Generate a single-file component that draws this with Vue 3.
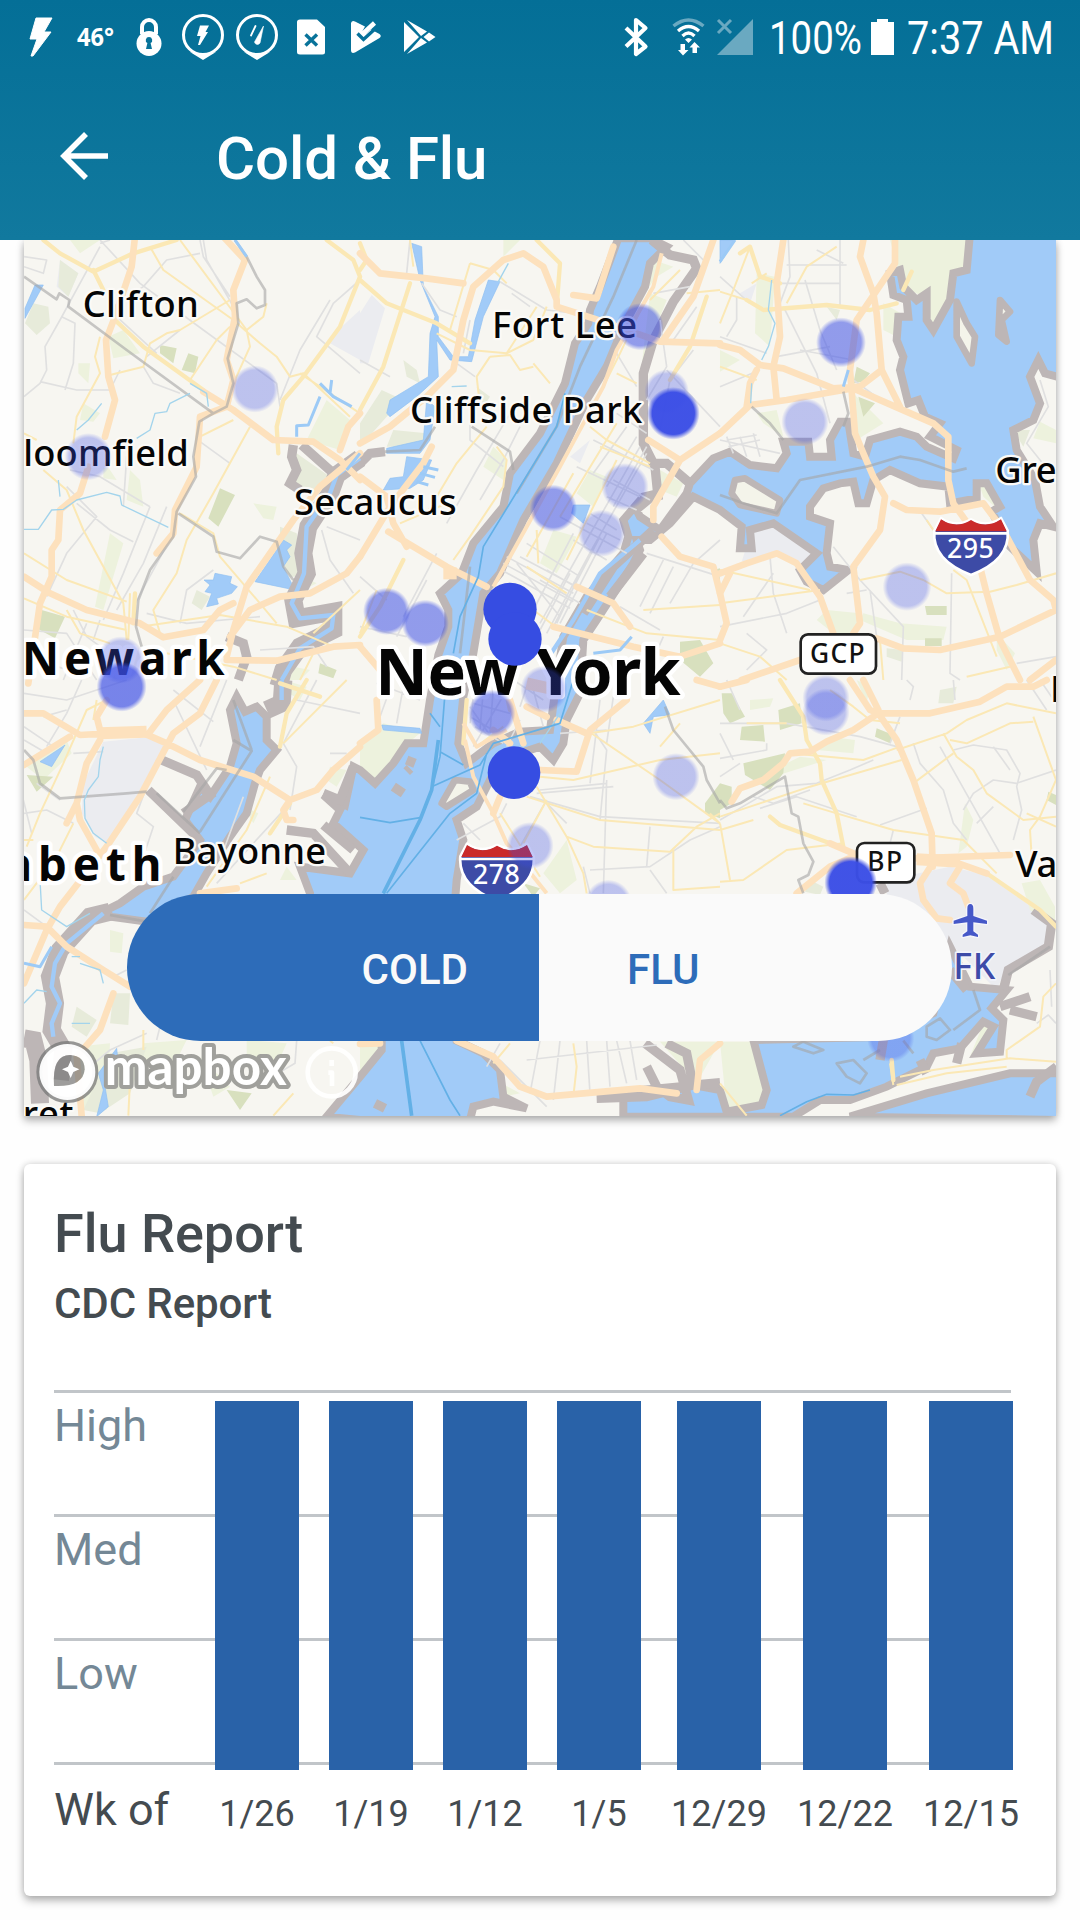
<script setup>
// Map tiles: every tile has its own local origin on the 3096 x 2628 map canvas.
const tiles = {
  a: 'translate(0 720)',
  b: 'translate(1080 720)',
  c: 'translate(2160 720)',
  d: 'translate(0 2040)',
  e: 'translate(1080 2040)',
  f: 'translate(2160 2040)',
  g: 'translate(0 0)',
}

const layers = [
  {
    name: 'urban',
    shapes: {
      a: 'M1080 210 L1020 265 990 310 1080 360Z M180 60 L235 100 205 170 170 140Z',
      b: 'M35 165 L75 205 25 370 0 370 0 220Z M690 600 L660 670 630 650Z',
      c: 'M95 870 L160 850 290 940 240 980 170 935 65 965Z M60 160 L110 130 90 190Z',
      d: 'M310 185 L460 170 500 200 330 495 285 470 245 400 250 310Z',
      f: 'M500 600 L690 560 800 585 990 720 980 800 860 860 830 930 690 790 500 660Z',
    },
  },
  {
    name: 'park',
    shapes: {
      a: 'M325 290 L370 270 420 340 340 355Z M235 370 L270 370 265 430 235 400Z M250 490 L300 520 280 545 240 540Z M980 480 L1050 540 1020 630 920 600Z M330 880 L370 910 310 1110 285 1100Z M390 690 L420 720 430 800 380 780Z M310 660 L350 720 310 715Z M760 790 L830 800 820 840 790 835Z M210 0 L300 0 240 40Z M880 1280 L930 1290 900 1320 860 1320Z M910 1010 L950 1030 890 1060Z',
      b: 'M690 690 L740 710 700 800 650 760Z M580 870 L650 890 590 1000 540 970Z M400 620 L440 660 430 720 370 680Z M880 60 L940 80 890 110 860 150Z M900 690 L970 730 950 770 900 750Z M430 0 L480 0 430 50Z M870 160 L920 180 860 330 840 420Z',
      c: 'M510 0 L750 0 740 80 690 180 640 260 610 170 550 140Z M110 100 L165 110 150 320 105 280Z M490 190 L560 230 530 290 490 270Z M0 330 L60 360 0 395Z M390 450 L420 480 490 550 410 600 395 570Z M960 545 L1008 570 1008 610 940 595Z M320 1110 L420 1120 400 1180 340 1180 290 1140Z M430 1120 L540 1150 680 1160 670 1200 560 1200 420 1140Z M830 1180 L885 1240 860 1290 830 1230Z M110 520 L170 510 190 590 130 550Z M780 740 L805 740 825 800 790 770Z',
      d: 'M80 260 L200 180 215 220 130 300Z M330 750 L370 760 365 820 330 815Z M430 1090 L560 1080 520 1160 420 1140Z M230 1100 L330 1090 320 1290 245 1290Z M740 1080 L860 1090 820 1180 740 1140Z M990 260 L1040 270 1010 320 980 300Z M730 380 L775 400 760 430Z M850 0 L920 20 900 60 850 30Z M600 1130 L690 1220 640 1250Z M860 560 L890 600 840 600Z',
      e: 'M0 200 L70 130 180 160 130 200 45 300 0 260Z M620 480 L650 600 600 640 550 580Z M60 1085 L60 1120 0 1180 0 1100Z M900 1085 L1080 1085 1010 1210Z M425 1210 L480 1240 430 1250Z',
      f: 'M0 1085 L95 1085 130 1230 115 1280 20 1290Z M330 170 L405 180 400 220 290 210Z M200 250 L240 230 320 240 160 290Z M735 370 L760 420 740 500 715 520Z M905 610 L960 600 1005 680 1005 740 930 690Z M790 1030 L815 1050 790 1110 750 1130Z M90 60 L160 55 150 80 90 90Z M410 0 L450 20 440 70Z',
    },
  },
  {
    name: 'grove',
    shapes: {
      a: 'M480 315 L530 325 520 370 480 340Z M565 340 L595 350 585 400 545 390Z M660 745 L705 765 655 860 625 835Z M125 1110 L195 1130 165 1195 110 1165Z M960 1270 L1010 1290 1000 1315 955 1300Z',
      b: 'M960 1205 L1020 1200 1060 1270 1020 1310 960 1260Z M1060 990 L1080 985 1080 1030Z',
      c: 'M410 380 L450 400 430 425 400 430Z M415 470 L465 490 430 530Z M615 1098 L680 1098 680 1125 620 1125Z M615 1195 L665 1195 665 1218 615 1218Z',
      d: 'M80 285 L160 290 110 335Z M680 1230 L755 1240 720 1290Z',
      e: 'M1080 310 L1035 370 1035 400 1080 415Z M490 610 L540 625 520 650Z',
      f: 'M5 40 L35 40 75 110 30 130 10 100Z M65 140 L130 135 135 185 60 180Z M175 90 L240 70 245 130 180 150Z M70 250 L195 220 190 280 150 330 75 285Z M0 310 L35 320 35 370 0 390Z M470 145 L520 165 510 190 465 170Z M985 335 L1008 345 1008 375 980 360Z',
    },
  },
  {
    name: 'marsh',
    shapes: {
      a: 'M890 640 L990 710 940 770 860 740Z M840 860 L890 880 910 1010 870 1010 840 950Z M100 190 L145 200 150 250 110 285 75 250Z M590 1050 L630 1070 605 1110 575 1090Z M180 60 L235 100 205 170 175 140Z',
      b: 'M65 450 L130 480 80 530 0 620 0 550Z M130 360 L170 390 180 430 140 410Z M100 570 L200 580 190 620 80 620Z M350 440 L390 470 370 500Z',
      d: 'M340 940 L390 940 385 1035 330 1030Z M230 980 L290 1020 260 1070 215 1040Z M330 1120 L440 1100 390 1240 300 1300 250 1290Z',
      f: 'M270 600 L310 620 300 645 255 635Z M660 30 L710 20 700 70 655 70Z',
      c: 'M320 200 L360 210 350 240Z M880 570 L930 570 910 620Z M500 1225 L550 1230 545 1265 500 1250Z',
    },
  },
  {
    name: 'sea',
    shapes: {
      g: 'M1855 715 L1800 860 1770 930 1765 970 1725 1030 1695 1150 1620 1300 1530 1420 1510 1520 1420 1630 1385 1720 1320 1780 1345 1830 1345 1880 1315 1965 1290 2100 1270 2230 1220 2230 1180 2290 1125 2350 1080 2310 1060 2300 1035 2415 970 2385 1020 2430 1000 2470 1090 2550 1050 2620 900 2600 930 2680 930 2780 900 2960 1145 3100 1145 3150 1080 3230 980 3350 1080 3360 1410 3360 1420 3320 1480 3305 1580 3325 1510 3290 1500 3210 1450 3160 1370 3122 1350 2900 1370 2640 1390 2520 1370 2460 1430 2420 1460 2360 1500 2280 1620 2240 1660 2280 1690 2230 1700 2160 1740 2080 1750 1920 1790 1860 1900 1690 1920 1650 1910 1620 1950 1620 2010 1570 2080 1490 2160 1530 2225 1580 2220 1645 2255 1645 2250 1590 2320 1570 2450 1660 2400 1710 2420 1745 2470 1770 2545 1710 2490 1700 2480 1660 2490 1570 2430 1550 2430 1520 2470 1465 2520 1450 2560 1445 2575 1510 2600 1510 2620 1440 2670 1410 2760 1450 2845 1460 2850 1510 2930 1495 2930 1450 2960 1450 3000 1520 2975 1535 3030 1640 3110 1715 3100 1620 3120 1570 3160 1580 3120 1520 3105 1440 3050 1350 3040 1290 3100 1260 3120 1210 3090 1130 3115 1080 3135 1120 3190 1135 3190 700 2910 700 2900 810 2860 820 2850 900 2800 990 2780 960 2780 880 2750 900 2710 860 2700 810 2670 820 2680 885 2720 900 2725 950 2695 950 2690 1020 2710 1070 2700 1110 2725 1210 2755 1200 2775 1250 2820 1270 2790 1310 2870 1350 2860 1375 2780 1340 2750 1310 2700 1295 2610 1320 2595 1370 2560 1360 2545 1265 2520 1265 2490 1320 2495 1370 2430 1370 2425 1325 2350 1325 2360 1360 2330 1405 2250 1395 2190 1355 2140 1375 2070 1450 2060 1480 1980 1590 1920 1550 1910 1530 1970 1480 1930 1490 1870 1560 1885 1610 1870 1660 1760 1790 1690 1910 1670 2040 1650 2190 1560 2195 1480 2230 1400 2290 1375 2230 1390 2090 1420 1960 1450 1780 1500 1720 1570 1560 1670 1390 1760 1200 1820 1100 1870 980 1935 860 1950 790 2000 740 1950 715Z',
      d: 'M710 50 L690 90 710 190 690 260 630 350 600 320 555 420 600 480 520 590 430 620 360 670 320 690 330 710 440 725 580 650 620 580 690 470 740 400 765 310 780 270 830 210 800 180 800 110 770 80 735 95Z',
      f: 'M100 1080 L140 1230 125 1275 20 1295 0 1230 -80 1215 -290 1235 -290 1310 220 1310 300 1260 390 1260 500 1220 620 1160 640 1120 720 1105 790 1025 820 1040 770 1120 840 1115 850 1020 815 985 860 930 750 920 690 800 640 1000 500 1070Z M390 1310 L620 1240 870 1180 1020 1180 1020 1320Z',
    },
  },
  {
    name: 'pond',
    shapes: {
      a: 'M105 135 L130 135 75 235 75 205Z M850 900 L875 915 860 930 870 950 850 980 885 1050 765 1025Z M645 1000 L695 1010 690 1030 712 1040 695 1060 650 1075 655 1092 620 1100 635 1060 615 1055 630 1035 612 1020 640 1020Z',
      b: 'M385 120 L420 125 370 230 335 365 270 360 230 300 235 410 170 470 90 530 80 520 90 480 205 410 210 280 225 230 180 120 155 10 185 20 190 140 235 230 235 290 280 350 325 350 345 240Z M640 795 L690 795 670 850 635 820Z M200 480 L225 500 210 600 180 640 80 640 80 625 190 600Z M70 750 L90 715 130 710 140 650 215 660 190 720 150 745Z',
      d: 'M120 245 L195 195 155 260Z M350 1105 L355 1150 315 1220 325 1280 290 1310 310 1230 295 1180Z',
      e: 'M65 135 L180 145 185 160 70 150Z M850 130 L910 60 930 105 880 110 870 160Z',
      c: 'M0 0 L45 0 0 70Z',
    },
  },
  {
    name: 'island',
    shapes: {
      c: 'M45 720 L75 715 180 780 170 820 60 795 35 760Z M710 185 L740 250 765 290 755 370 710 290Z M840 180 L870 215 845 240 860 305 835 285Z',
      e: 'M285 300 L330 305 340 330 260 380 245 370Z',
    },
  },
  {
    name: 'pier',
    shapes: {
      d: 'M485 240 L590 285 630 345 550 400 M445 330 L590 470 M860 450 L940 460 1050 580 M970 435 L1060 510 M1060 260 L1020 360 970 340',
      e: 'M140 240 L165 250 M150 265 L140 275 M100 320 L130 340 M855 1090 L960 1170 985 1260 930 1250 890 1220 860 1160 M710 1255 L860 1250 1000 1215 1080 1208 M920 1090 L980 1120 1000 1220 M45 1270 L75 1285',
      f: 'M840 980 L930 950 M870 990 L950 1010 M940 690 L995 730 985 800 865 870 850 930 M740 930 L690 870 M480 610 L495 640 M710 1150 L725 1090 M930 1250 L950 1205 1010 1160 M600 1140 L620 1180 M490 1080 L480 1140',
      g: 'M1955 720 L2010 765 2080 780 2090 805 2020 905 1960 1020 1930 1120 1930 1330 1965 1400 1975 1500 M1965 1390 L2000 1390 2070 1450 M1960 1590 L1840 1700 1750 1840 M1930 1660 L1830 1790',
      a: 'M880 615 L875 650 890 690 870 730 900 750 M905 615 L1000 700 M680 1190 L730 1210 740 1250 715 1320',
      b: 'M0 670 L30 640 75 635',
    },
  },
  {
    name: 'channel-bank',
    shapes: {
      a: 'M1080 655 L1010 705 990 760 925 860 910 940 920 1000 880 1080 890 1135 1000 1115 1000 1170 900 1220 850 1290 835 1340',
      d: 'M850 0 L845 70 800 90 M330 695 L270 710 180 810 150 890 165 970 155 1050 190 1110 180 1200 M72 1075 L100 1080 115 1140 120 1270',
    },
  },
  {
    name: 'channel',
    shapes: {
      a: 'M1080 655 L1010 705 990 760 920 860 912 1000 875 1090 900 1135 1000 1125 995 1165 900 1225 845 1320',
      b: 'M560 1260 L640 1140 720 1000 840 900',
      d: 'M845 0 L845 60 M310 700 L200 790 165 850 155 920 180 970 155 1030 160 1070',
    },
  },
  {
    name: 'street',
    shapes: {
      a: 'M72 50 L140 60 130 100 72 80 M300 20 L180 240 135 320 140 390 120 430 72 470 M185 230 L225 250 220 370 195 450 M120 425 L230 450 330 450 360 390 M300 0 L420 130 610 270 830 430 840 500 M610 0 L620 60 700 200 M600 40 L500 60 430 140 340 200 M600 0 L610 50 670 140 690 170 M350 230 L470 340 M430 380 L460 430 540 460 M540 270 L440 350 M990 180 L900 330 840 480 M600 605 L690 670 M210 690 L300 710 450 800 M230 790 L330 870 400 905 M450 800 L370 1000 310 1140 M500 800 L430 970 350 1110 M520 880 L400 1100 M200 740 L290 830 200 940 140 1070 M640 990 L560 1050 540 1150 M440 1120 L560 1150 780 1130 M780 1230 L940 1220 980 1280 M965 870 L990 960 1060 1060 M980 860 L1080 900 M380 650 L370 800 M72 1170 L200 1180 290 1320 M220 1110 L260 1190 370 1270 M330 0 L300 10 M1080 120 L1000 190 950 290 1080 400 M260 1150 L190 1320 M300 1140 L280 1200 M72 1250 L270 1310',
      b: 'M150 0 L140 100 M185 130 L240 210 290 230 M0 360 L90 410 M330 240 L310 340 M420 125 L560 210 650 220 M455 160 L510 200 M290 370 L345 410 M330 540 L330 600 430 680 M450 520 L350 690 260 850 M480 560 L430 660 360 780 M880 160 L990 140 M900 240 L920 380 860 480 M1000 330 L930 420 900 570 M920 390 L1080 560 M1010 200 L940 300 M1030 60 L970 0 M770 340 L830 440 M0 1010 L80 1080 M230 940 L130 1130 M200 1020 L110 1190 M0 1160 L140 1190 M860 940 L1080 1010 M910 960 L840 1100 M940 980 L870 1120 M780 1100 L900 1170 M1080 900 L1000 970 930 1090 M870 1280 L910 1190',
      c: 'M205 0 L210 110 180 190 M200 75 L380 75 M180 130 L360 130 M290 30 L370 70 M360 0 L360 200 M0 110 L90 190 M50 170 L50 240 20 290 M0 290 L140 340 M190 200 L290 400 330 550 M240 330 L400 360 M0 440 L120 390 M170 350 L330 320 M255 120 L300 270 350 390 M0 600 L180 640 M20 590 L40 640 M60 590 L80 650 M100 580 L120 650 M20 600 L110 585 M25 620 L120 600 M400 420 L510 500 M960 420 L985 500 920 610 1008 720 M150 950 L160 1060 200 1180 M0 1160 L200 1120 300 1080 M340 920 L420 1020 550 1160 545 1320 M605 820 L640 870 M695 1000 L690 1300 720 1320 M450 1050 L470 1190 M890 1270 L1008 1250 M80 1180 L140 1230 80 1290 M380 1060 L440 1050 M160 1000 L70 1130',
      d: 'M72 40 L200 60 380 0 M245 0 L200 100 140 200 M72 140 L160 200 M72 180 L140 220 M220 220 L310 215 M72 400 L140 390 220 430 M110 310 L180 360 M70 360 L95 460 M470 240 L410 400 460 440 430 530 M520 30 L640 125 M680 0 L600 200 M520 60 L620 270 M730 350 L660 540 M850 190 L890 260 870 390 M950 0 L850 190 M890 60 L1080 100 M1040 220 L990 220 M870 370 L650 610 M500 960 L470 1080 M440 1060 L330 1110 270 1160 M890 1082 L885 1150 800 1200 M340 890 L380 870 M72 690 L140 740 M200 90 L130 110',
      e: 'M540 330 L740 310 M530 340 L760 320 M740 300 L730 640 M700 150 L740 210 720 420 M720 60 L690 310 M690 570 L870 560 990 480 1080 440 M870 440 L860 560 M760 50 L740 190 M670 560 L690 640 M870 570 L920 640 M480 120 L440 200 M330 80 L400 180 M340 70 L450 100 M600 160 L740 150 M290 480 L420 410 440 370 M310 430 L360 480 M560 370 L620 430 M480 500 L560 360 M510 350 L720 410 1080 430 M500 1140 L890 1095 M540 1082 L510 1240 M600 1082 L580 1260 M680 1082 L690 1240 M740 1082 L750 1220 M770 1082 L800 1210 M810 1082 L830 1200 M420 1140 L560 1280 M380 1160 L420 1090 M100 0 L60 110 M130 20 L110 130 M50 10 L180 60',
      f: 'M0 130 L200 130 420 170 530 200 M0 235 L140 210 140 190 M0 290 L60 250 M0 420 L170 320 290 310 390 270 460 240 M100 350 L160 370 270 330 M120 385 L230 350 410 410 M480 435 L620 385 M520 450 L510 490 M540 110 L510 190 M580 190 L600 250 670 330 700 430 740 480 M660 200 L840 520 M700 210 L760 195 860 210 900 280 890 320 905 390 880 480 M890 310 L820 300 760 340 730 390 M890 310 L1008 270 M560 0 L580 20 570 60 M700 0 L705 60 M920 0 L980 90 M960 0 L1008 70 M0 160 L40 240 M20 0 L60 90 M820 380 L770 430 M990 870 L995 980 M950 1030 L985 1005 1008 1030 M820 200 L870 270',
    },
  },
  {
    name: 'grid-street',
    shapes: {
      b: 'M440 950 L640 1060 M430 970 L640 1085 M425 990 L630 1105 M480 950 L650 1040 M500 910 L660 1010 M470 970 L600 1130 M560 1180 L700 920 860 640 M540 1150 L680 900 840 620 M600 1150 L740 880 M520 1110 L640 880 M580 1160 L720 890 M600 830 L800 940 M650 680 L840 770 M700 600 L880 690 M770 520 L860 580 M760 720 L870 780 M690 820 L770 870 M740 770 L830 810 M680 850 L780 900 M640 900 L740 960 M800 560 L700 700 M830 590 L740 740 M860 620 L760 800 M540 1020 L660 1090 M560 990 L680 1060 M630 1000 L540 1170 M660 1000 L590 1150',
      e: 'M340 50 L330 130 M370 30 L360 150 M400 20 L390 160 M440 30 L340 200 M330 110 L450 180 M345 140 L430 190 M460 0 L550 60 M500 20 L480 80 M520 30 L550 140',
    },
  },
  {
    name: 'minor',
    shapes: {
      a: 'M450 20 L490 90 700 240 780 310 830 350 870 410 910 400 1050 530 M540 0 L740 270 M690 260 L650 300 570 420 M740 270 L790 230 800 190 M740 270 L750 320 700 430 M330 405 L430 380 450 310 500 280 540 270 690 180 M300 290 L285 350 300 400 230 530 220 610 M750 560 L640 760 560 900 530 1000 460 1110 480 1180 M540 820 L640 880 660 950 780 1090 830 1150 M72 940 L200 1020 380 1085 M130 690 L200 750 250 870 370 1090 380 1200 M72 1075 L200 1130 380 1170 M420 1160 L660 1125 860 1160 1000 1220 M1080 520 L900 400 M72 580 L110 600 M600 590 L700 540 M200 1110 L240 1180 330 1210 M390 1060 L385 1200 M500 1240 L700 1280 830 1320 M1080 1050 L940 1180 M940 1240 L900 1320',
      b: 'M150 0 L160 80 M330 70 L270 270 M330 70 L400 90 440 130 M230 280 L330 330 440 340 530 200 M390 350 L350 410 360 500 M390 350 L450 345 480 390 520 380 M440 340 L520 300 560 200 M520 370 L570 430 M380 560 L290 670 200 820 M410 620 L440 660 430 740 330 890 280 960 M260 790 L120 850 M690 560 L740 600 870 670 M870 150 L780 340 720 460 600 680 M960 90 L870 180 M1080 150 L980 160 M770 400 L830 430 M640 700 L500 950 M770 660 L620 960 M530 870 L535 970 M770 550 L600 830 M720 620 L870 680 M500 980 L620 1060 M850 1110 L1080 1095 M680 1110 L860 1180 1080 1200 M520 1110 L600 1170 M0 1180 L50 1050',
      c: 'M0 155 L80 180 M95 130 L140 100 M350 20 L260 80 200 190 M0 250 L40 150 90 20 M420 1020 L540 995 610 1020 680 1060 810 1055 890 1035 1008 1000 M0 990 L270 1050 M0 1090 L300 1050 M700 990 L740 1020 830 1250 M640 870 L620 840 M0 1210 L120 1250 200 1320 M480 1200 L490 1320 M740 1310 L870 1280 M0 380 L110 420',
      d: 'M320 60 L260 90 190 250 120 400 80 500 M290 60 L280 120 M220 430 L170 530 72 660 M1040 0 L850 190 M810 290 L740 450 620 620 M800 580 L720 610 M430 1050 L430 1110 M390 1200 L385 1307 M880 1240 L820 1307 M1000 1090 L990 1082 M72 480 L100 480',
      e: 'M540 290 L640 300 900 240 1080 220 M530 320 L620 470 670 580 680 640 M500 350 L720 420 1080 450 M620 470 L700 500 930 515 1010 440 1080 400 M680 150 L900 300 1080 430 M690 160 L820 140 1080 60 M940 510 L940 630 1080 620 M900 200 L960 130 M560 360 L490 490 M350 200 L430 140 M640 1090 L650 1160 640 1250 M450 1090 L400 1150 M420 400 L540 590 M1050 400 L1080 430',
      f: 'M330 30 L400 80 450 120 540 130 M530 210 L680 160 740 120 860 70 1008 100 M200 130 L80 130 M210 220 L430 240 540 200 M690 180 L740 190 870 130 940 125 M670 160 L710 230 760 270 800 340 910 420 1008 410 M1008 300 L960 410 930 450 935 530 M580 310 L700 220 M545 240 L270 320 0 410 M250 370 L350 400 520 450 730 480 830 580 M370 490 L200 510 70 600 0 605 M940 110 L1008 300 M100 420 L0 450 M0 430 L30 600 M920 400 L1008 440 M1008 910 L970 950 960 1040 860 1110 860 1140 M540 1190 L640 1170 870 1135 1008 1145 M530 1215 L680 1180 860 1160 M0 1210 L80 1307 M510 1150 L520 1215',
    },
  },
  {
    name: 'major',
    shapes: {
      a: 'M130 0 L180 40 280 95 400 40 530 0 M280 90 L310 150 M350 245 L430 320 610 450 M1080 110 L1020 260 910 410 850 480 830 560 835 640 M980 0 L1060 60 1080 110 M405 1060 L400 1150',
      b: 'M0 120 L80 190 230 250 330 310 M530 0 L600 70 590 200 M0 510 L70 380 150 130 M0 10 L20 60 0 90 M0 1190 L60 1100 130 960 M1040 170 L990 320 930 420',
      c: 'M90 20 L120 110 180 130 M80 180 L130 210 320 195 450 210 530 190 M575 95 L550 150 M60 40 L90 20',
      d: 'M920 0 L860 100 840 200 M870 370 L810 460 M840 10 L960 50',
      e: 'M320 60 L310 190 M430 0 L450 90',
      f: 'M180 0 L250 110 260 180 300 250 305 300 350 400 370 500 M150 410 L180 435 330 490 M800 580 L960 690 1008 740 M515 1140 L520 1200',
    },
  },
  {
    name: 'highway',
    shapes: {
      a: 'M405 -10 L395 80 345 230 318 300 325 410 345 480 315 590 M265 680 L240 760 180 810 175 900 155 930 155 1010 120 1090 85 1330 M670 -10 L735 60 700 150 705 230 680 360 700 420 680 500 600 530 590 680 525 810 520 880 470 940 M610 455 L700 510 820 600 940 605 1020 660 1080 720 M72 1010 L150 1060 260 1110 420 1150 490 1192 610 1170 660 1110 700 1090 M1080 640 L960 740 880 840 740 1040 700 1170 680 1250 M690 1190 L750 1110 840 1070 930 1060 1040 1000 1080 950 M680 1260 L830 1262 1000 1220 1080 1215 M1020 630 L1045 560 1080 520',
      b: 'M0 40 L60 100 200 115 310 130 M0 610 L90 560 200 470 280 390 310 240 340 140 430 60 490 40 550 80 590 180 590 200 700 235 900 305 1080 310 M640 165 L710 175 760 20 M215 620 L190 670 90 800 0 950 M0 710 L80 770 100 850 140 920 M85 875 L260 980 380 1040 M1060 0 L1000 170 910 300 M865 600 L960 660 1080 580 M960 660 L880 800 880 840 M905 890 L960 950 1060 980 1080 1060 M580 1160 L820 1220 960 1250 1080 1210 M650 1040 L760 1090 810 1160 M0 1220 L60 1290 80 1320',
      c: 'M190 0 L170 130 180 290 160 380 170 480 M0 315 L60 330 120 375 190 385 340 445 420 440 485 390 540 500 M0 580 L90 495 200 480 400 445 640 550 685 590 685 720 700 790 750 860 800 1060 840 1200 900 1320 M485 390 L470 220 460 160 420 50 430 0 M525 0 L525 70 410 240 390 390 405 580 430 640 460 710 495 770 480 870 400 980 420 1150 400 1180 M520 790 L560 810 660 815 790 790 850 870 930 1020 1000 1080 1008 1110 840 1190 660 1230 550 1225 470 1195 M0 1000 L80 970 170 940 230 970 300 1070 340 1180 M110 390 L90 430 80 500 M65 1320 L240 1260 M30 1000 L0 1060 20 1150 0 1200 M930 1320 L1008 1260',
      d: 'M72 100 L130 100 240 165 420 155 500 190 600 240 760 290 870 360 950 330 1000 270 1080 200 M72 255 L210 170 M600 0 L500 90 450 155 M650 0 L600 100 520 160 420 350 320 500 180 680 140 750 72 910 M300 180 L260 250 230 370 240 420 290 510 M230 370 L200 430 M72 735 L140 740 200 800 310 870 390 920 M870 360 L850 390 860 420 880 420 M600 640 L710 625 M340 940 L300 1050 230 1130 245 1307 M320 60 L290 110 300 150',
      e: 'M50 60 L55 150 0 190 M400 400 L420 350 M540 270 L650 275 690 150 800 60 M450 60 L490 190 M590 120 L680 160 M400 150 L450 190 M290 1082 L400 1130 480 1220 560 1250 840 1225 950 1240 M1080 1090 L1020 1140 1010 1230 M1010 0 L1080 20 M0 1092 L60 1090 M500 80 L560 110',
      f: 'M0 20 L80 0 M390 0 L450 90 475 100 530 180 580 300 635 460 638 560 M430 0 L475 90 M475 100 L630 100 780 65 860 20 940 20 980 0 M475 100 L400 150 320 185 270 215 210 220 190 250 130 300 60 325 35 365 M230 640 L330 560 400 530 580 535 870 525 M330 490 L400 520 M638 550 L600 610 610 660 650 715 690 720 M720 560 L690 610 730 640 745 680 M700 545 L800 580',
    },
  },
  {
    name: 'shoreway',
    shapes: {
      b: 'M905 40 L880 140 770 330 730 440 600 680 500 860 400 1040',
      e: 'M315 180 L340 290 400 400 440 490 560 640 M310 130 L350 200 440 150 M250 440',
    },
  },
  {
    name: 'depot',
    shapes: { d: 'M300 160 L440 155', f: 'M590 538 L720 545', e: 'M500 10 L590 30', b: 'M250 1000 L290 1000' },
  },
  {
    name: 'border',
    shapes: {
      a: 'M72 110 L170 178 178 160 208 180 205 200 380 330 640 520 680 500 700 430 683 355 715 250 710 190 740 178 770 205 795 195 795 150 770 110 740 50 705 0 M640 520 L598 545 580 650 588 710 530 815 520 890 450 990 415 1080 408 1160 425 1220 M535 820 L640 890 650 935 720 955 780 890 830 905 850 980 880 1020',
      b: 'M335 560 L450 635 460 690 M75 635 L180 630 225 560 M830 0 L760 170 660 380 590 560 470 760 M330 980 L300 1240',
      c: 'M95 500 L150 550 190 600 M370 455 L385 520 370 560 M0 765 L70 790 170 820 240 720 440 680 540 650 600 660 700 695 740 685',
      d: 'M72 210 L100 240 120 310 180 355 380 340 440 335 M700 180 L755 213 600 455 M700 60 L755 210 M520 590 L450 700 M330 705 L440 725 M470 340 L600 460 M550 395 L650 265 680 270',
      e: 'M915 80 L940 150 1030 260 1040 300 1080 370',
      f: 'M0 360 L20 385 60 370 195 290 215 400 235 410 250 490 280 545 265 585 235 600 250 640 M990 800 L865 885 M220 1100 L250 1085 310 1110 280 1120Z M350 1150 L400 1140 440 1180 420 1210 380 1190Z M620 1040 L660 1015 690 1050 650 1080 620 1070Z M760 930 L780 990 700 1050 M430 1140 L480 1110 M550 1082 L580 1120',
    },
  },
  {
    name: 'stream',
    shapes: {
      a: 'M570 460 L510 490 500 515 465 520 450 570 410 595 M305 490 L265 540 230 570 M72 868 L115 868 155 810 190 808 230 780 320 757 360 768 365 795 505 862 M175 720 L180 770 M570 430 L620 460 625 500',
      b: 'M445 70 L415 125 M275 440 L320 438',
      c: 'M155 120 L145 210 165 250 145 320 125 360 M95 430 L92 490',
      d: 'M310 200 L300 240 295 290 265 330 253 360 255 415 280 460 320 490 M120 600 L125 690 200 740 270 700 M72 970 L110 930 140 935 M215 830 L240 830 M240 850 L300 870 310 910 M215 1030 L270 1030',
      e: 'M540 190 L600 100',
    },
  },
  {
    name: 'creek',
    shapes: {
      a: 'M890 590 L890 557 925 555 960 470 M960 430 L1000 470 1055 500 M995 420 L990 460 M705 0 L740 50 M1080 640 L1040 690',
      d: 'M72 850 L120 860 155 800',
      b: 'M700 1240 L780 1230 815 1190 M190 680 L235 690 M180 700 L225 712 M170 725 L205 735',
      c: 'M385 390 L370 440 M45 0 L0 65',
    },
  },
  {
    name: 'ferry',
    shapes: {
      b: 'M615 460 L590 560 370 920 355 1010 300 1130 280 1240',
      e: 'M255 40 L240 230 215 330 180 420 70 640 M0 412 L90 428 185 412 M220 318 L360 255 400 190 600 130 640 0 M80 640 L270 400 350 340 380 220 M210 100 L240 140 M240 215 L310 255 M180 1082 L270 1260 300 1307',
      f: 'M180 1307 L260 1265 320 1243 400 1245 450 1230',
    },
  },
  {
    name: 'ferry-main',
    shapes: { e: 'M235 180 L215 330 180 420 70 640 M125 1082 L155 1307' },
  },
]

const labels = [
  { text: 'Clifton', x: 248, y: 950, w: 348 },
  { text: 'loomfield', x: 70, y: 1398, w: 496 },
  { text: 'Secaucus', x: 882, y: 1544, w: 488 },
  { text: 'Fort Lee', x: 1476, y: 1015, w: 435 },
  { text: 'Cliffside Park', x: 1230, y: 1270, w: 697 },
  { text: 'Gre', x: 2986, y: 1449, w: 184 },
  { text: 'Bayonne', x: 518, y: 2593, w: 460 },
  { text: 'Va', x: 3046, y: 2632, w: 126 },
  { text: 'ret', x: 68, y: 3382, w: 152 },
  { text: 'H', x: 3150, y: 2107, w: 84 },
  { text: 'Newark', x: 66, y: 2024, w: 608, kind: 'city' },
  { text: 'abeth', x: 14, y: 2644, w: 470, kind: 'city' },
  { text: 'New York', x: 1126, y: 2086, w: 916, kind: 'metro' },
]

const shields = [
  { text: '295', x: 2913, y: 1560 },
  { text: '278', x: 1491, y: 2537 },
]

// Heat points: x, y, radius, strength
const reports = [
  [765, 1167, 66, 'low'], [265, 1370, 66, 'low'], [362, 1980, 66, 'low'], [365, 2060, 70, 'high'],
  [1920, 980, 66, 'mid'], [2000, 1175, 62, 'low'], [2020, 1240, 74, 'top'], [1875, 1460, 66, 'low'],
  [1660, 1525, 66, 'mid'], [1805, 1600, 66, 'low'], [1530, 1828, 80, 'max'], [1545, 1917, 80, 'max'],
  [1160, 1834, 66, 'mid'], [1276, 1870, 66, 'mid'], [1632, 2068, 66, 'low'], [1475, 2140, 66, 'mid'],
  [1542, 2318, 79, 'max'], [1590, 2537, 66, 'low'], [1825, 2710, 66, 'low'], [2028, 2330, 66, 'low'],
  [2523, 1027, 70, 'mid'], [2415, 1265, 66, 'low'], [2721, 1760, 68, 'low'], [2478, 2094, 66, 'low'],
  [2478, 2136, 66, 'low'], [2552, 2648, 74, 'top'], [2672, 3115, 66, 'low'],
]
const strengths = { low: 0.31, mid: 0.54, high: 0.68, top: 0.97, max: 1 }

const levels = ['High', 'Med', 'Low']
const weeks = [
  { label: '1/26', value: 100 },
  { label: '1/19', value: 100 },
  { label: '1/12', value: 100 },
  { label: '1/5', value: 100 },
  { label: '12/29', value: 100 },
  { label: '12/22', value: 100 },
  { label: '12/15', value: 100 },
]
</script>

<template>
  <div class="screen">
    <header class="top">
      <div class="status">
        <svg class="status-left" width="540" height="76" viewBox="0 0 540 76" fill="#fff">
          <path d="M36 18H52L44 32H51L33 56H31L37 39H30Z" stroke="#fff" stroke-width="1" stroke-linejoin="round" />
          <text x="77" y="45.500" class="temp" textLength="37" lengthAdjust="spacingAndGlyphs">46°</text>
          <path d="M142 34V27a7 7 0 0 1 14 0V34" fill="none" stroke="#fff" stroke-width="4" />
          <circle cx="149" cy="43.500" r="12.500" />
          <path d="M149 37a3.200 3.200 0 0 1 1.600 6L152 49H146L147.400 43A3.200 3.200 0 0 1 149 37Z" fill="#08739a" />
          <g fill="none" stroke="#fff" stroke-width="3">
            <circle cx="203" cy="35" r="19.500" />
            <circle cx="257" cy="35" r="19.500" />
          </g>
          <path d="M190 52Q203 56 216 52L203 60Z M244 52Q257 56 270 52L257 60Z" />
          <path d="M200 25.500H209L205.500 32H208L200 45H198L200.500 36H197Z" />
          <path d="M255.500 26L251 35.500" fill="none" stroke="#fff" stroke-width="1.800" stroke-linecap="round" />
          <path d="M263.500 26L260 43A3 3 0 0 1 254.500 42Z" stroke="#fff" stroke-width=".6" />
          <path d="M300 19.500H317L325 27V52Q325 54.500 322.500 54.500H300Q297 54.500 297 52V22Q297 19.500 300 19.500Z" />
          <path d="M305.500 34.500L317 45.500M317 34.500L305.500 45.500" stroke="#08739a" stroke-width="3.400" />
          <path d="M351 23Q352 20 355 21.500L365 26.500 362.500 31 366 33.500 371 29.500 379.500 34Q382 36 379.500 38L355 52.500Q351 54 351 50Z" />
          <path d="M362.500 34L374.500 23" fill="none" stroke="#fff" stroke-width="4.600" />
          <path d="M357.500 33.500L363.500 39.500 376 28" fill="none" stroke="#06719a" stroke-width="3.400" />
          <path d="M404 22L419 37 404 52Z M407 20L427 31.500 421 36Z M407 54L427 42.500 421 38Z M429 32.500L435.500 37 429 41.500 423.500 37Z" />
        </svg>
        <svg class="status-right" width="540" height="76" viewBox="540 0 540 76" fill="#fff">
          <path d="M626 28L645.500 46.500 636 54V20L645.500 28 626 46.500" fill="none" stroke="#fff" stroke-width="4.200" stroke-linejoin="round" />
          <path d="M673.500 26Q688.500 14 703.500 26" fill="none" stroke="#6aa9c1" stroke-width="3.500" />
          <path d="M678 31Q688.500 22 699 31M682.500 36Q688.500 30 694.500 36" fill="none" stroke="#fff" stroke-width="3.300" />
          <path d="M685 39.500Q688.500 36.500 692 39.500L688.500 43Z M680.500 44H685V50H688.500L683 55.500 678 50H680.500Z M692.500 53V47.500H689.500L694.500 42 700 47.500H697V53Z" />
          <path d="M753 19V55H717Z" fill="#6aa9c1" />
          <path d="M718 20L731 33M731 20L718 33" stroke="#6aa9c1" stroke-width="3" />
          <text x="769" y="54" class="clock" textLength="93" lengthAdjust="spacingAndGlyphs">100%</text>
          <path d="M877 19H888V22H894V55H871V22H877Z" />
          <text x="907" y="54" class="clock" textLength="147" lengthAdjust="spacingAndGlyphs">7:37 AM</text>
        </svg>
      </div>
      <div class="toolbar">
        <svg width="48" height="48" viewBox="0 0 48 48" fill="none" stroke="#fff" stroke-width="5.600">
          <path d="M26 2L4 24 26 46M4 24H48" />
        </svg>
        <h1>Cold &amp; Flu</h1>
      </div>
    </header>

    <section class="map-card">
      <svg class="map" width="1032" height="876" viewBox="72 720 3096 2628">
        <defs>
          <radialGradient id="soft">
            <stop offset="0" stop-color="#3b4ee6" />
            <stop offset="0.8" stop-color="#3b4ee6" />
            <stop offset="1" stop-color="#3b4ee6" stop-opacity="0" />
          </radialGradient>
        </defs>
        <g v-for="layer in layers" :key="layer.name" :class="layer.name">
          <path v-for="(d, tile) in layer.shapes" :key="tile" :transform="tiles[tile]" :d="d" />
        </g>

        <text v-for="l in labels" :key="l.text" class="place" :class="l.kind" :x="l.x" :y="l.y" :textLength="l.w">{{ l.text }}</text>

        <g v-for="s in shields" :key="s.text" :transform="`translate(${s.x} ${s.y})`">
          <path d="M-90 -6L-76 3Q-40 20 0 -2Q40 20 76 3L90 -6L110 32Q118 120 0 165Q-118 120 -110 32Z" fill="#3d4ba6" stroke="#fff" stroke-width="8" />
          <path d="M-90 -2Q-45 28 0 0Q45 28 90 -2L107 34H-107Z" fill="#ca2a2a" />
          <path d="M-109 40H109" stroke="#fff" stroke-width="8" />
          <text class="shield" x="-72" y="115" textLength="140">{{ s.text }}</text>
        </g>

        <g class="sign">
          <rect x="2402" y="1903" width="226" height="118" rx="22" />
          <text x="2430" y="1988" textLength="164">GCP</text>
          <rect x="2571" y="2529" width="172" height="118" rx="22" />
          <text x="2602" y="2613" textLength="104">BP</text>
        </g>

        <path class="plane" transform="translate(2911 2712)" d="M0 0Q9 0 9 14V36L50 50V60L9 55V82L23 92V99L0 94 -23 99V92L-9 82V55L-50 60V50L-9 36V14Q-9 0 0 0Z" />
        <text class="airport" x="2860" y="2937" textLength="126">FK</text>

        <circle
          v-for="(r, i) in reports"
          :key="i"
          :cx="r[0]"
          :cy="r[1]"
          :r="r[3] === 'max' ? r[2] : r[2] + 5"
          :fill="r[3] === 'max' ? '#364de2' : 'url(#soft)'"
          :opacity="strengths[r[3]]"
        />

        <g class="brand">
          <circle cx="202" cy="3216" r="84" fill="none" stroke="#777" stroke-opacity=".75" stroke-width="18" />
          <path fill-rule="evenodd" fill="#fff" fill-opacity=".96" d="M202 3132a84 84 0 1 0 .1 0ZM162 3258Q156 3165 210 3165Q254 3168 254 3208Q250 3262 162 3258Z" />
          <path fill="#777" fill-opacity=".7" d="M162 3258Q156 3165 210 3165Q254 3168 254 3208Q250 3262 162 3258Z" />
          <path fill="#fff" d="M212 3182L220 3200 238 3208 220 3216 212 3234 204 3216 186 3208 204 3200Z" />
          <text x="314" y="3254" textLength="546" lengthAdjust="spacingAndGlyphs">mapbox</text>
        </g>
        <g class="info">
          <circle cx="995" cy="3217" r="72" />
          <path d="M995 3180V3198M985 3218H996V3258" />
        </g>
      </svg>

      <div class="toggle">
        <button class="cold">COLD</button>
        <button class="flu">FLU</button>
      </div>
    </section>

    <section class="report">
      <h2>Flu Report</h2>
      <h3>CDC Report</h3>
      <div class="chart">
        <div class="rows">
          <div v-for="level in levels" :key="level" class="row">{{ level }}</div>
          <div class="row base"></div>
        </div>
        <div class="bars">
          <div v-for="w in weeks" :key="w.label" class="slot">
            <div class="bar" :style="{ height: w.value + '%' }"></div>
          </div>
        </div>
      </div>
      <div class="axis">
        <span class="axis-title">Wk of</span>
        <span v-for="w in weeks" :key="w.label" class="week">{{ w.label }}</span>
      </div>
    </section>
  </div>
</template>

<style>
body {
  background: #fefefe;
}
</style>

<style scoped>
.screen {
  width: 1080px;
  height: 1920px;
  overflow: hidden;
  display: flex;
  flex-direction: column;
  background: #fefefe;
  font-family: Roboto, sans-serif;
}
.top {
  position: relative;
  z-index: 1;
  height: 240px;
  flex: none;
  color: #fff;
  background: linear-gradient(#046f97, #11799e);
}
.status {
  display: flex;
  height: 76px;
}
.temp {
  font: 700 25.500px "Noto Sans", sans-serif;
}
.clock {
  font: 400 45.500px Roboto, sans-serif;
}
.toolbar {
  display: flex;
  align-items: center;
  height: 160px;
  padding-left: 60px;
}
.toolbar h1 {
  margin: 6px 0 0 108px;
  font-size: 60px;
  line-height: 70px;
  font-weight: 500;
  letter-spacing: -0.1px;
}
.map-card,
.report {
  flex: none;
  margin: 0 24px;
  box-shadow: 0 5px 8px rgba(0, 0, 0, 0.26), 0 0 7px rgba(0, 0, 0, 0.16);
}
.map-card {
  position: relative;
  height: 876px;
  background: #f7f6f1;
}
.map {
  display: block;
  fill: none;
  stroke-linejoin: round;
}
.urban { fill: #ebecf0; }
.park { fill: #edf2dd; }
.grove { fill: #d8e0be; }
.marsh { fill: #e7ebda; }
.sea { fill: #a1cbf8; stroke: #bdb6b6; stroke-width: 24; stroke-linejoin: miter; }
.pond { fill: #a1cbf8; stroke: #8fbff2; stroke-width: 2; }
.island { fill: #f4f4ea; stroke: #bdb6b6; stroke-width: 20; }
.pier { stroke: #bdb6b6; stroke-width: 28; stroke-linejoin: miter; }
.channel-bank { stroke: #bdb6b6; stroke-width: 54; stroke-linejoin: miter; }
.channel { stroke: #a1cbf8; stroke-width: 13; }
.street { stroke: #e0e0e0; stroke-width: 5; }
.grid-street { stroke: #dfdfdf; stroke-width: 5; }
.minor { stroke: #fbe8b5; stroke-width: 6; }
.major { stroke: #fbe8b5; stroke-width: 13; stroke-linecap: round; }
.highway { stroke: #fde1bd; stroke-width: 20; stroke-linecap: round; }
.shoreway { stroke: #fde1bd; stroke-width: 12; }
.depot { stroke: #fde1bd; stroke-width: 36; }
.border { stroke: #a5a5a5; stroke-opacity: 0.6; stroke-width: 8; }
.stream { stroke: #a3d4ec; stroke-width: 4; }
.creek { stroke: #9ccaf6; stroke-width: 9; }
.ferry { stroke: #63b0e6; stroke-width: 5; }
.ferry-main { stroke: #63b0e6; stroke-width: 11; }
.place {
  font: 500 109px "Noto Sans", sans-serif;
  fill: #050505;
  stroke: #fbfaf7;
  stroke-width: 14px;
  paint-order: stroke;
}
.place.city {
  font-size: 137px;
  font-weight: 700;
  stroke: #fff;
  stroke-width: 26px;
}
.place.metro {
  font-size: 194px;
  font-weight: 700;
  stroke: #fff;
  stroke-width: 26px;
}
.shield {
  font: 500 80px "Noto Sans", sans-serif;
  fill: #fff;
}
.sign rect {
  fill: #fff;
  stroke: #222;
  stroke-width: 8px;
}
.sign text {
  font: 500 79px "Noto Sans", sans-serif;
  fill: #111;
}
.plane {
  fill: #4658c8;
  stroke: #f5f5fb;
  stroke-width: 8px;
  paint-order: stroke;
}
.airport {
  font: 500 107px "Noto Sans", sans-serif;
  fill: #3d4ba8;
  stroke: #f1f3fa;
  stroke-width: 10px;
  paint-order: stroke;
}
.brand text {
  font: 700 154px Lato, sans-serif;
  fill: #fff;
  stroke: #a0a09c;
  stroke-width: 24px;
  stroke-linejoin: round;
  paint-order: stroke;
}
.info {
  stroke: #fff;
  stroke-opacity: 0.93;
  stroke-width: 14px;
}
.toggle {
  position: absolute;
  left: 103px;
  top: 654px;
  display: flex;
  width: 825px;
  height: 147px;
  border-radius: 74px;
  overflow: hidden;
}
.toggle button {
  border: 0;
  font: 500 42px/147px Roboto, sans-serif;
}
.toggle .cold {
  width: 412px;
  padding: 2px 71px 0 0;
  text-align: right;
  color: #fafafa;
  background: #2d6cb9;
}
.toggle .flu {
  flex: 1;
  padding: 2px 0 0 88px;
  text-align: left;
  color: #2d6cb9;
  background: #fafafa;
}
.report {
  margin-top: 48px;
  height: 732px;
  box-sizing: border-box;
  padding: 38px 30px 0;
  border-radius: 6px;
  background: #fff;
  color: #444b50;
}
.report h2 {
  margin: 0;
  font-size: 54px;
  line-height: 63px;
  font-weight: 500;
}
.report h3 {
  margin: 14px 0 0;
  font-size: 42px;
  line-height: 50px;
  font-weight: 500;
  letter-spacing: -0.1px;
}
.chart {
  display: grid;
  height: 380px;
  margin-top: 61px;
}
.rows,
.bars {
  grid-area: 1 / 1;
}
.rows {
  width: 957px;
}
.row {
  box-sizing: border-box;
  height: 124px;
  padding-top: 6px;
  border-top: 3px solid #c1c5c9;
  font-size: 45px;
  line-height: 53px;
  color: #748896;
}
.row.base {
  height: 3px;
  padding: 0;
}
.bars,
.axis {
  display: grid;
  grid-template-columns: 146px repeat(4, 114px) repeat(3, 126px);
}
.bars {
  padding-top: 11px;
}
.slot {
  display: flex;
  align-items: flex-end;
  justify-content: center;
  height: 369px;
}
.slot:first-child {
  grid-column: 2;
}
.bar {
  width: 84px;
  background: #2962a8;
}
.axis {
  align-items: baseline;
  margin-top: 13px;
}
.axis-title {
  font-size: 45px;
  line-height: 53px;
}
.week {
  position: relative;
  top: 1px;
  text-align: center;
  font-size: 36px;
}
</style>
